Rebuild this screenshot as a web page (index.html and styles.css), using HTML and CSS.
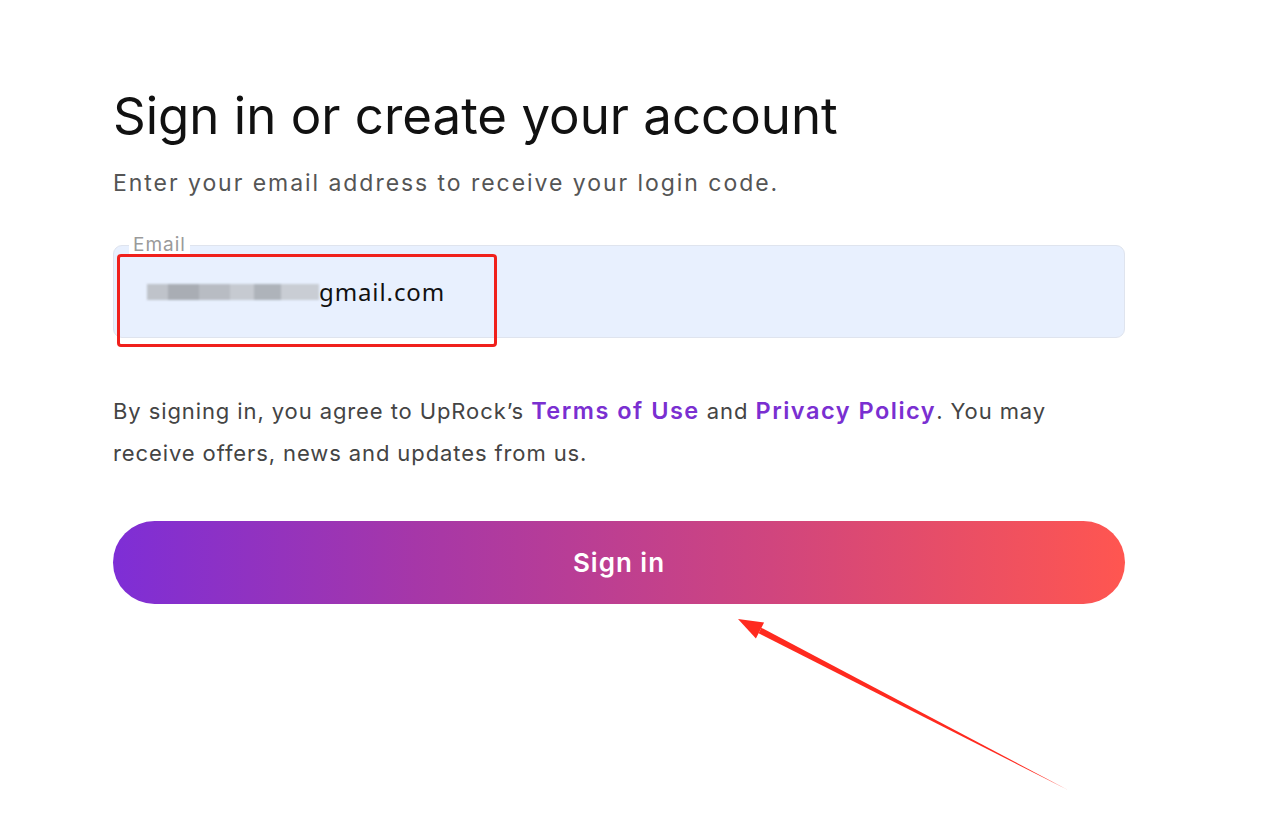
FILE: index.html
```html
<!DOCTYPE html>
<html lang="en">
<head>
    <meta charset="UTF-8">
    <title>Sign in</title>
    <link rel="stylesheet" href="styles.css">
</head>
<body>
<div class="page">
    <h1 class="title">Sign in or create your account</h1>
    <p class="sub">Enter your email address to receive your login code.</p>

    <div class="field">
        <span class="legend">Email</span>
        <div class="input">
            <span class="blur"></span><span class="mail">gmail.com</span>
        </div>
        <!-- 标注框 -->
        <div class="mark"></div>
    </div>

    <p class="terms">By signing in, you agree to UpRock’s <a href="#">Terms of Use</a> and <a href="#">Privacy Policy</a>. You may receive offers, news and updates from us.</p>

    <button class="btn">Sign in</button>

    <!-- 箭头 -->
    <svg class="arrow" width="370" height="190" viewBox="0 0 370 190">
        <polygon points="41.4,15.8 348,178 38.6,21.2" fill="#ff2a1f"/>
        <polygon points="18,7 44.1,10.5 35.9,26.5" fill="#ff2a1f"/>
    </svg>
</div>
</body>
</html>
```

FILE: styles.css
```css
*{
    margin: 0;
    padding: 0;
    box-sizing: border-box;
}
html,body{
    background: #fff;
}
body{
    font-family: Inter, "Noto Sans", sans-serif;
    color: #111;
}
.page{
    position: relative;
    width: 1262px;
    height: 833px;
    padding: 84px 0 0 113px;
}
.title{
    font-size: 51px;
    font-weight: 400;
    line-height: 64px;
    color: #111;
}
.sub{
    margin-top: 20px;
    font-size: 23px;
    line-height: 30px;
    letter-spacing: 1.95px;
    color: #555;
}
.field{
    position: relative;
    margin-top: 47px;
    width: 1012px;
}
.legend{
    position: absolute;
    left: 16px;
    top: -11px;
    padding: 0 4px;
    background: #fff;
    font-size: 19px;
    line-height: 22px;
    letter-spacing: 1px;
    color: #9a9a9a;
}
.input{
    height: 93px;
    background: #e8f0fe;
    border: 1px solid #dfe4ee;
    border-radius: 9px;
    display: flex;
    align-items: center;
    padding: 0 0 0 33px;
}
.blur{
    display: inline-block;
    width: 172px;
    height: 16px;
    background: linear-gradient(90deg, #bfc3ca 0 12%, #a9adb4 12% 30%, #b8bcc3 30% 48%, #c6cad1 48% 62%, #aeb3ba 62% 78%, #c9cdd4 78% 100%);
    filter: blur(1px);
}
.mail{
    font-family: "Noto Sans", sans-serif;
    font-size: 24px;
    letter-spacing: 0.9px;
    color: #111;
}
.mark{
    position: absolute;
    left: 4px;
    top: 9px;
    width: 380px;
    height: 93px;
    border: 3px solid #f0201c;
    border-radius: 4px;
}
.terms{
    margin-top: 52px;
    width: 960px;
    font-size: 22px;
    line-height: 42px;
    letter-spacing: 0.9px;
    color: #444;
}
.terms a{
    color: #7a2fd1;
    font-size: 23.5px;
    line-height: 1;
    font-weight: 600;
    letter-spacing: 1.5px;
    text-decoration: none;
}
.btn{
    display: block;
    margin-top: 47px;
    width: 1012px;
    height: 83px;
    border: none;
    border-radius: 42px;
    background: linear-gradient(90deg, #7e2ed6 0%, #a637a8 30%, #d0457e 65%, #ff5650 100%);
    color: #fff;
    font-family: Inter, sans-serif;
    font-size: 26px;
    font-weight: 600;
    letter-spacing: 1px;
}
.arrow{
    position: absolute;
    left: 720px;
    top: 612px;
}
```
